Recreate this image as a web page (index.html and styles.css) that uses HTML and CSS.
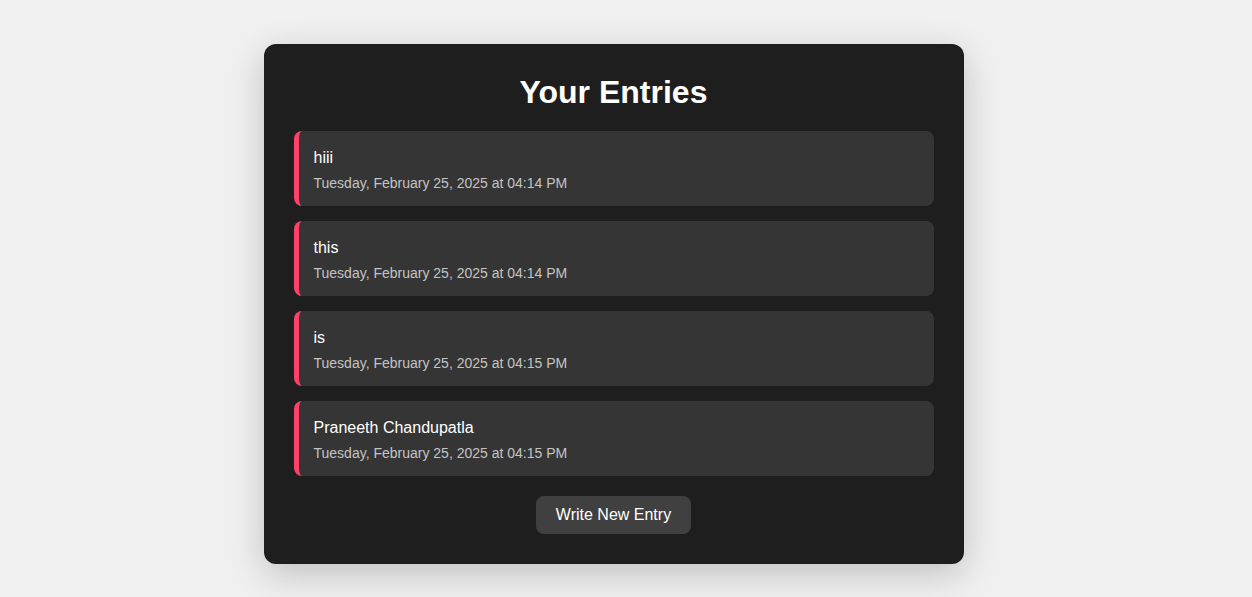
FILE: index.html
```html
<!DOCTYPE html>
<html lang="en">
<head>
  <meta charset="utf-8">
  <meta name="viewport" content="width=device-width, initial-scale=1">
  <title>Your Entries</title>
  <link rel="stylesheet" href="styles.css">
</head>
<body>
  <main class="journal">
    <h1 class="journal-title">Your Entries</h1>
    <ul class="entries">
      <li class="entry">
        <p class="entry-text">hiii</p>
        <time class="entry-date" datetime="2025-02-25T16:14">Tuesday, February 25, 2025 at 04:14 PM</time>
      </li>
      <li class="entry">
        <p class="entry-text">this</p>
        <time class="entry-date" datetime="2025-02-25T16:14">Tuesday, February 25, 2025 at 04:14 PM</time>
      </li>
      <li class="entry">
        <p class="entry-text">is</p>
        <time class="entry-date" datetime="2025-02-25T16:15">Tuesday, February 25, 2025 at 04:15 PM</time>
      </li>
      <li class="entry">
        <p class="entry-text">Praneeth Chandupatla</p>
        <time class="entry-date" datetime="2025-02-25T16:15">Tuesday, February 25, 2025 at 04:15 PM</time>
      </li>
    </ul>
    <a class="new-entry" href="#new">Write New Entry</a>
  </main>
</body>
</html>
```
FILE: styles.css
```css
* {
  box-sizing: border-box;
}

body {
  margin: 0;
  padding: 44px 25px 32px 0;
  min-height: 100vh;
  background: #f0f0f0;
  color: #fff;
  font-family: "Liberation Sans", Arial, sans-serif;
  font-size: 16px;
}

.journal {
  display: flex;
  flex-direction: column;
  align-items: center;
  max-width: 700px;
  margin: 0 auto;
  padding: 30px;
  border-radius: 12px;
  background: #1e1e1e;
  box-shadow: 0 10px 36px rgba(0, 0, 0, 0.2);
}

.journal-title {
  margin: 0 0 20px;
  font-size: 32px;
  line-height: 37px;
}

.entries {
  display: flex;
  flex-direction: column;
  gap: 15px;
  width: 100%;
  margin: 0 0 20px;
  padding: 0;
  list-style: none;
}

.entry {
  padding: 15px;
  border-left: 5px solid #ff4069;
  border-radius: 8px;
  background: #353535;
}

.entry-text {
  margin: 0 0 5px;
  line-height: 24px;
}

.entry-date {
  display: block;
  color: #c4c4c4;
  font-size: 14px;
  line-height: 16px;
}

.new-entry {
  padding: 10px 20px;
  border-radius: 8px;
  background: #404040;
  color: #fff;
  line-height: 18px;
  text-decoration: none;
}
```
